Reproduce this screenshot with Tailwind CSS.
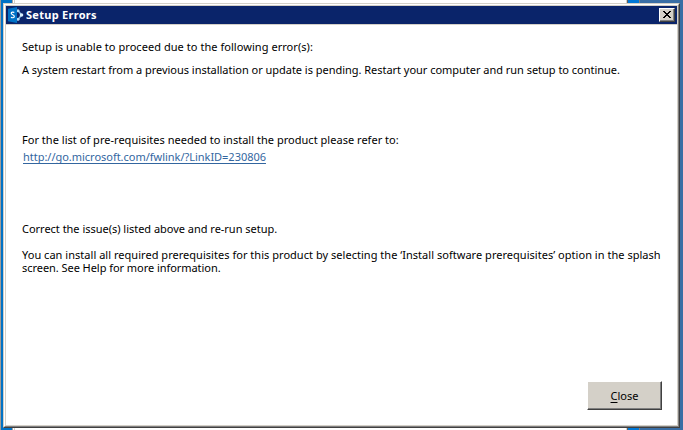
<!DOCTYPE html>
<html lang="en">
<head>
<meta charset="utf-8">
<title>Setup Errors</title>
<script src="https://cdn.jsdelivr.net/npm/@tailwindcss/browser@4"></script>
</head>
<body class="w-[683px] h-[430px] overflow-hidden bg-[#3a6ea5] font-['Noto_Sans',sans-serif] text-[11px] text-black">
<div class="relative w-[683px] h-[430px] overflow-hidden">
  <div class="flex h-full w-full">
    <div class="w-px bg-[#a09c98]"></div>
    <div class="w-[11px] bg-[#0072c6]"></div>
    <div class="w-px bg-[#a0a0a0]"></div>
    <div class="w-px bg-white"></div>
    <div class="w-px bg-[#d4d0c8]"></div>
    <div class="flex-1 bg-white"></div>
    <div class="w-px bg-[#d4d0c8]"></div>
    <div class="w-px bg-[#606060]"></div>
    <div class="w-[11px] bg-[#0078d7]"></div>
    <div class="w-px bg-[#808080]"></div>
    <div class="w-[43px] bg-[#3a6ea5]"></div>
  </div>
  <section class="absolute left-[3px] top-[3px] w-[677px] h-[425px] border border-t-[#d4d0c8] border-l-[#d4d0c8] border-r-[#404040] border-b-[#404040]">
    <div class="flex h-full flex-col border border-t-white border-l-white border-r-[#808080] border-b-[#808080]">
      <div class="flex flex-1 flex-col border border-[#d4d0c8] bg-white">
        <header class="flex h-[18px] items-center bg-[#0a246a] pl-[2px] pr-[2px] text-white">
          <svg class="h-4 w-4 shrink-0" viewBox="0 0 16 16">
            <path d="M10 3.500 13.500 8 10 12.500" fill="none" stroke="#8cc4ea" stroke-width="1.400"/>
            <circle cx="10" cy="3.700" r="1.500" fill="#b9def5"/><circle cx="13.500" cy="8" r="1.800" fill="#d8eefb"/><circle cx="10" cy="12.300" r="1.500" fill="#b9def5"/>
            <path d="M0 1.800 9 0v16L0 14.200z" fill="#0072c6"/>
            <path d="M6.300 5.500C5.500 4.800 3.200 4.800 3.200 6.300S6.300 7.900 6.300 9.500 4 11 3 10.200" fill="none" stroke="#fff" stroke-width="1.200"/>
          </svg>
          <h1 class="ml-[2px] flex-1 whitespace-nowrap font-bold tracking-[0.28px]">Setup Errors</h1>
          <button aria-label="Close" class="flex h-[14px] w-4 items-center justify-center border border-t-white border-l-white border-r-[#404040] border-b-[#404040] bg-[#d4d0c8] shadow-[inset_-1px_-1px_0_#808080]">
            <svg class="mr-px mb-px h-[7px] w-2" viewBox="0 0 8 7" shape-rendering="crispEdges" fill="#000"><path d="M0 0h2v1h1v1h2V1h1V0h2v1H7v1H6v1H5v1h1v1h1v1h1v1H6V6H5V5H3v1H2v1H0V6h1V5h1V4h1V3H2V2H1V1H0z"/></svg>
          </button>
        </header>
        <div class="h-px bg-[#d4d0c8]"></div>
        <main class="flex flex-1 flex-col pl-4 pr-[15px] leading-[13px] whitespace-nowrap">
          <p class="mt-[15px] tracking-[0.05px]">Setup is unable to proceed due to the following error(s):</p>
          <p class="mt-[10px] tracking-[-0.026px]">A system restart from a previous installation or update is pending. Restart your computer and run setup to continue.</p>
          <p class="mt-[57px] tracking-[0.026px]">For the list of pre-requisites needed to install the product please refer to:</p>
          <p class="mt-[4px] pl-px tracking-[-0.024px]"><a class="text-[#33669f] underline underline-offset-2 [text-decoration-skip-ink:none]">http://go.microsoft.com/fwlink/?LinkID=230806</a></p>
          <p class="mt-[59px] tracking-[-0.02px]">Correct the issue(s) listed above and re-run setup.</p>
          <p class="mt-[13px] tracking-[0.03px]">You can install all required prerequisites for this product by selecting the ‘Install software prerequisites’ option in the splash<br><span class="tracking-[-0.05px]">screen. See Help for more information.</span></p>
          <button class="mt-auto mb-[15px] h-[29px] w-[75px] self-end border border-t-white border-l-white border-r-[#404040] border-b-[#404040] bg-[#d4d0c8] shadow-[inset_-1px_-1px_0_#808080]"><span class="underline underline-offset-2">C</span>lose</button>
        </main>
      </div>
    </div>
  </section>
</div>
</body>
</html>
